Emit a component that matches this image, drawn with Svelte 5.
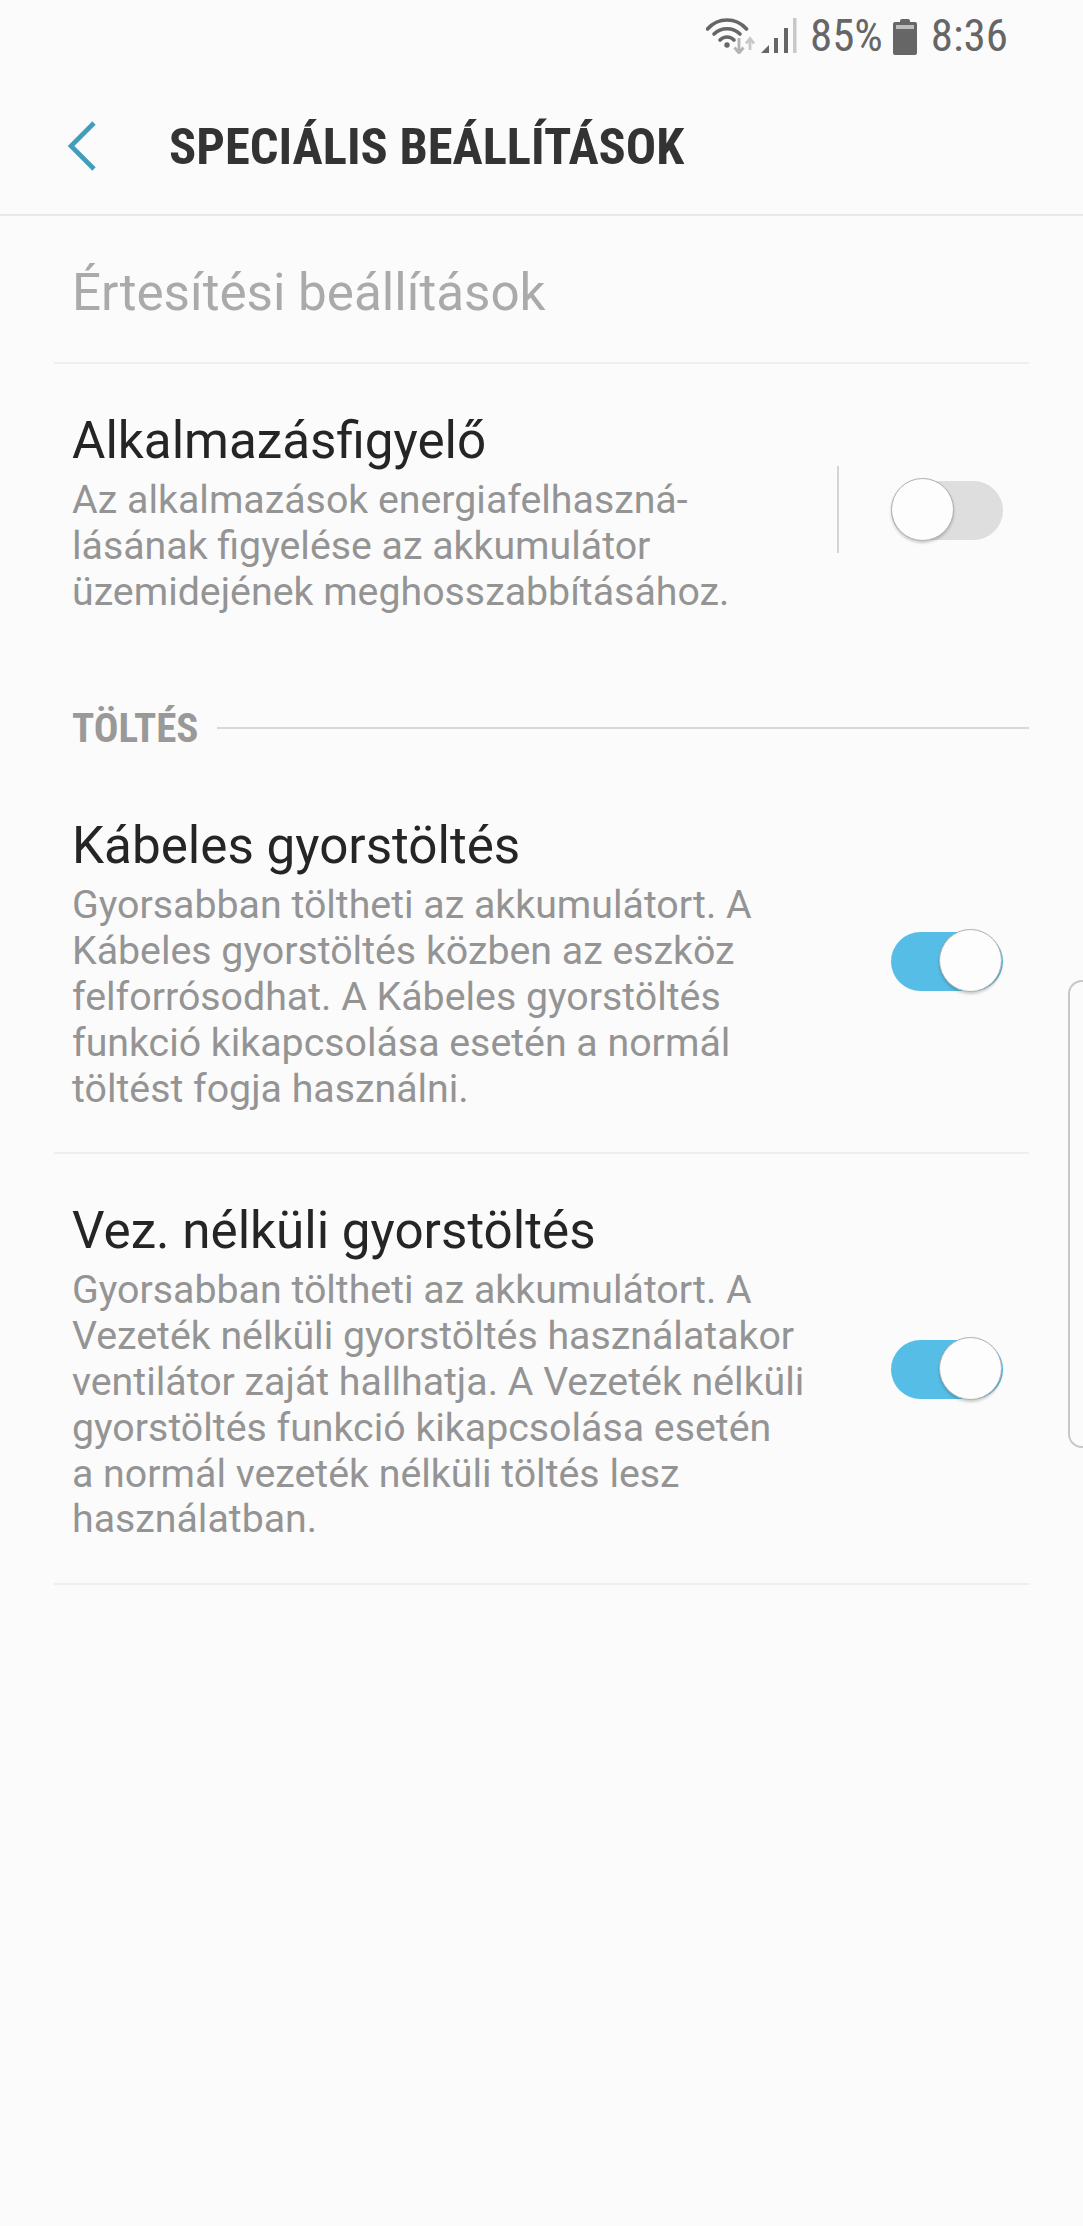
<script>
    const rows = [
        {
            title: 'Kábeles gyorstöltés',
            lines: [
                'Gyorsabban töltheti az akkumulátort. A',
                'Kábeles gyorstöltés közben az eszköz',
                'felforrósodhat. A Kábeles gyorstöltés',
                'funkció kikapcsolása esetén a normál',
                'töltést fogja használni.'
            ]
        },
        {
            title: 'Vez. nélküli gyorstöltés',
            lines: [
                'Gyorsabban töltheti az akkumulátort. A',
                'Vezeték nélküli gyorstöltés használatakor',
                'ventilátor zaját hallhatja. A Vezeték nélküli',
                'gyorstöltés funkció kikapcsolása esetén',
                'a normál vezeték nélküli töltés lesz',
                'használatban.'
            ]
        }
    ];
    const monitorLines = [
        'Az alkalmazások energiafelhaszná-',
        'lásának figyelése az akkumulátor',
        'üzemidejének meghosszabbításához.'
    ];
</script>

<div class="screen">
    <div class="status">
        <svg class="wifi" width="49" height="36" viewBox="0 0 49 36">
            <path d="M1.5 11 C12 -1 30 -1 40.5 11" fill="none" stroke="#666" stroke-width="3.6" stroke-linecap="round" />
            <path d="M8 16 C15 9 27 9 34 16" fill="none" stroke="#666" stroke-width="3.6" stroke-linecap="round" />
            <path d="M14 22 C18 18 24 18 28 22" fill="none" stroke="#666" stroke-width="3.6" stroke-linecap="round" />
            <circle cx="21" cy="27" r="2.7" fill="#666" />
            <path d="M33 20 V34 M28.5 29.5 L33 35 L37.5 29.5" fill="none" stroke="#b4b4b4" stroke-width="2.8" />
            <path d="M44 32 V21 M40 25.5 L44 20.5 L48 25.5" fill="none" stroke="#c8c8c8" stroke-width="2.8" />
        </svg>
        <svg class="signal" width="36" height="36" viewBox="0 0 36 36">
            <path d="M0 35 L8 27 V35 Z" fill="#666" />
            <rect x="13" y="20" width="4" height="15" fill="#666" />
            <rect x="23" y="10" width="4" height="25" fill="#666" />
            <rect x="32" y="0" width="3.5" height="35" fill="#c8c8c8" />
        </svg>
        <span class="pct">85%</span>
        <svg class="battery" width="24" height="37" viewBox="0 0 24 37">
            <path d="M7 3 a2 2 0 0 1 2 -2 h6 a2 2 0 0 1 2 2 v1 h5 a2 2 0 0 1 2 2 v29 a2 2 0 0 1 -2 2 h-20 a2 2 0 0 1 -2 -2 v-29 a2 2 0 0 1 2 -2 h5 z" fill="#666" />
            <rect x="3" y="7" width="18" height="4" fill="#bdbdbd" />
        </svg>
        <span class="clock">8:36</span>
    </div>

    <header class="header">
        <svg class="back" width="30" height="50" viewBox="0 0 30 50">
            <path d="M27 2 L4 25 L27 48" fill="none" stroke="#419dbd" stroke-width="4.6" />
        </svg>
        <h1>SPECIÁLIS BEÁLLÍTÁSOK</h1>
    </header>

    <main class="list">
        <div class="disabled-row">Értesítési beállítások</div>

        <div class="row no-line">
            <div class="text">
                <div class="title">Alkalmazásfigyelő</div>
                <div class="desc">
                    {#each monitorLines as line}
                        <div>{line}</div>
                    {/each}
                </div>
            </div>
            <div class="vline"></div>
            <div class="toggle">
                <div class="thumb"></div>
            </div>
        </div>

        <div class="subheader">
            <span>TÖLTÉS</span>
            <div class="subline"></div>
        </div>

        {#each rows as row}
            <div class="row">
                <div class="text">
                    <div class="title">{row.title}</div>
                    <div class="desc">
                        {#each row.lines as line}
                            <div>{line}</div>
                        {/each}
                    </div>
                </div>
                <div class="toggle on">
                    <div class="thumb"></div>
                </div>
            </div>
        {/each}
    </main>

    <div class="edge-handle"></div>
</div>

<style>
    :global(body) {
        margin: 0;
        background: #fbfbfb;
    }

    .screen {
        position: relative;
        width: 1083px;
        height: 2226px;
        overflow: hidden;
        background: #fbfbfb;
        font-family: Roboto, "Liberation Sans", sans-serif;
    }

    .status {
        height: 72px;
        display: flex;
        align-items: center;
        justify-content: flex-end;
        padding-right: 75px;
        box-sizing: border-box;
        color: #666;
    }

    .wifi { margin-right: 6px; margin-top: -1px; }
    .signal { margin-right: 13px; }
    .battery { margin-left: 10px; margin-right: 14px; }

    .pct, .clock {
        font-size: 45px;
        font-stretch: 75%;
        line-height: 72px;
    }

    .header {
        height: 144px;
        display: flex;
        align-items: center;
        padding: 5px 0 0 67px;
        box-sizing: border-box;
        border-bottom: 2px solid #e8e8e8;
    }

    .header h1 {
        margin: 2px 0 0 72px;
        font-size: 50.5px;
        font-weight: 700;
        font-stretch: 75%;
        color: #333;
        white-space: nowrap;
    }

    .list {
        margin: 0 54px;
    }

    .disabled-row {
        height: 148px;
        display: flex;
        align-items: center;
        padding: 6px 0 0 18px;
        box-sizing: border-box;
        font-size: 51.2px;
        color: #aaa;
        border-bottom: 2px solid #eee;
    }

    .row {
        display: flex;
        align-items: center;
        padding: 48px 26px 40px 18px;
        border-bottom: 2px solid #eee;
    }

    .row.no-line {
        border-bottom: none;
    }

    .text {
        flex: 1;
        min-width: 0;
    }

    .title {
        font-size: 51.2px;
        line-height: 58px;
        color: #252525;
        margin-bottom: 8px;
    }

    .desc {
        font-size: 39.3px;
        line-height: 45.8px;
        color: #949494;
        white-space: nowrap;
    }

    .vline {
        width: 2px;
        height: 87px;
        background: #d4d4d4;
        margin: 0 52px 8px 0;
    }

    .toggle {
        position: relative;
        flex: none;
        width: 112px;
        height: 59px;
        margin-bottom: 6px;
        border-radius: 30px;
        background: #dedede;
    }

    .toggle.on {
        background: #56bee6;
    }

    .thumb {
        position: absolute;
        left: 0;
        top: -3px;
        width: 61px;
        height: 61px;
        border: 1.5px solid #b0b0b0;
        border-radius: 50%;
        background: #fdfdfd;
        box-shadow: 0 2px 3px rgba(0, 0, 0, 0.2);
    }

    .toggle.on .thumb {
        left: 48px;
    }

    .subheader {
        display: flex;
        align-items: center;
        gap: 19px;
        height: 46px;
        margin: 50px 0 18px;
        padding-left: 18px;
    }

    .subheader span {
        font-size: 41px;
        font-weight: 700;
        font-stretch: 75%;
        color: #999;
    }

    .subline {
        flex: 1;
        height: 2px;
        background: #d8d8d8;
    }

    .edge-handle {
        position: absolute;
        left: 1068px;
        top: 980px;
        width: 20px;
        height: 468px;
        box-sizing: border-box;
        border: 2px solid #c8c8c8;
        border-right: none;
        border-radius: 14px 0 0 14px;
    }
</style>
